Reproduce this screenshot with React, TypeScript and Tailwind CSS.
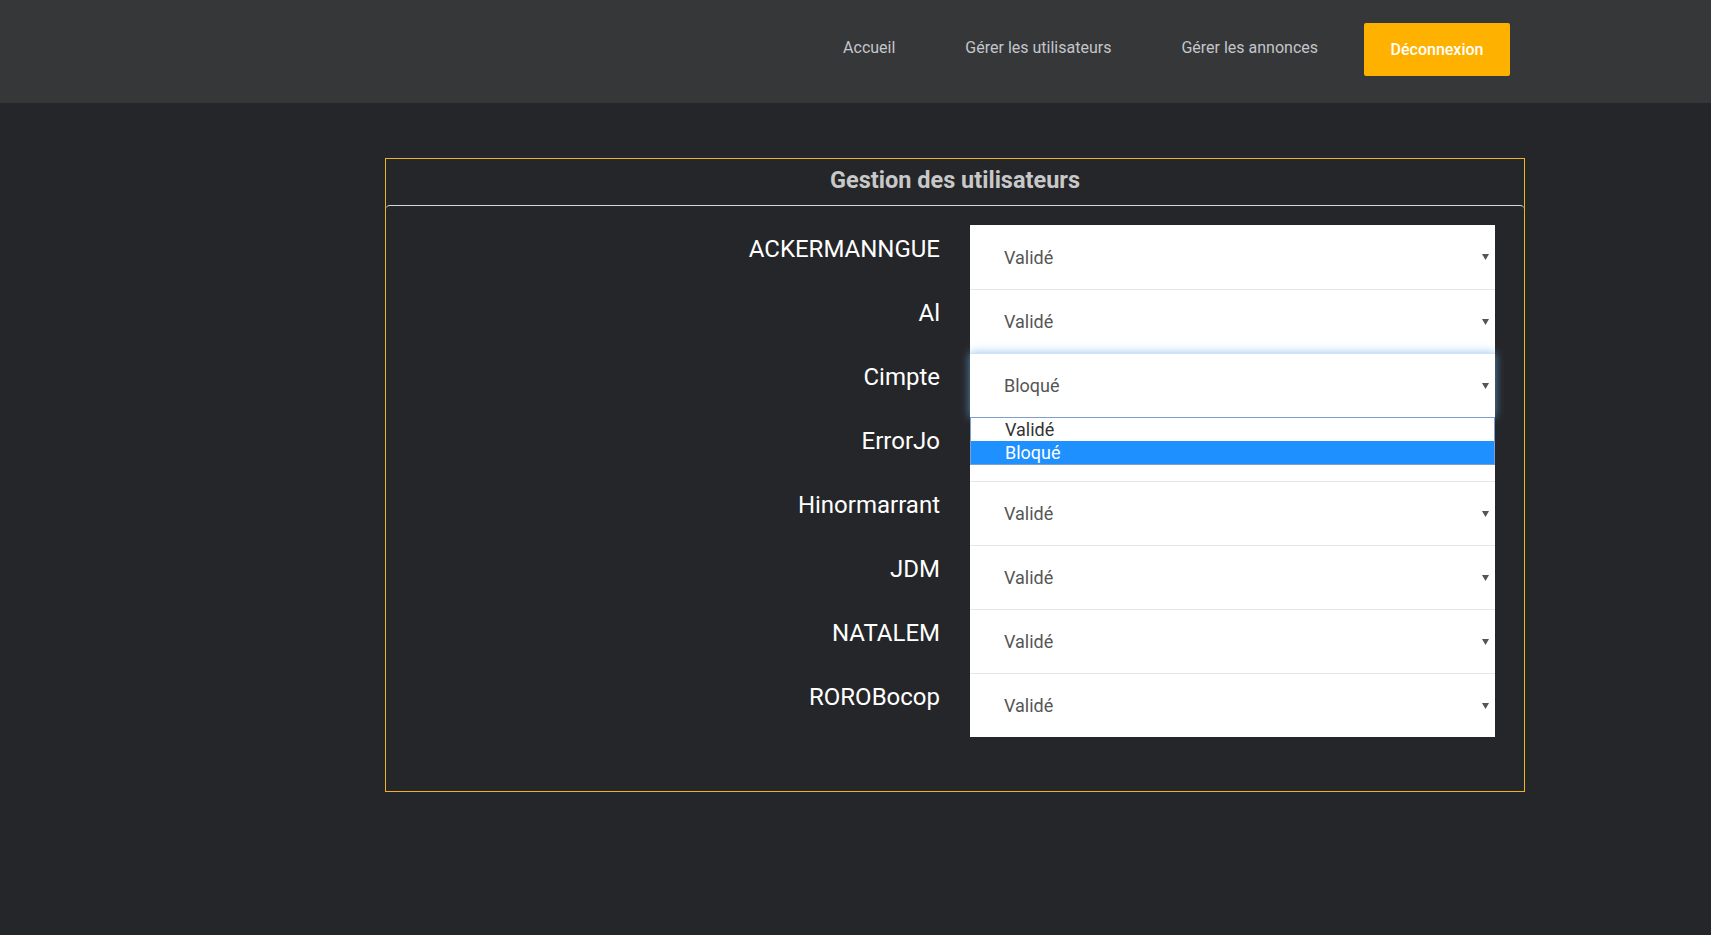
import { useState } from 'react';

type User = { name: string; status: string };

const users: User[] = [
  { name: 'ACKERMANNGUE', status: 'Validé' },
  { name: 'Al', status: 'Validé' },
  { name: 'Cimpte', status: 'Bloqué' },
  { name: 'ErrorJo', status: 'Validé' },
  { name: 'Hinormarrant', status: 'Validé' },
  { name: 'JDM', status: 'Validé' },
  { name: 'NATALEM', status: 'Validé' },
  { name: 'ROROBocop', status: 'Validé' },
];

const Arrow = () => (
  <svg width="7" height="6" viewBox="0 0 7 6" className="shrink-0">
    <path d="M0 0h7L3.5 6z" fill="#555" />
  </svg>
);

const Header = () => (
  <header className="h-[103px] bg-[#363739] flex items-center justify-end pr-[201px] pb-[4px]">
    <nav className="flex items-center text-[16px] text-[#c3c6ca]">
      <a className="px-[35px] pb-[4px]">Accueil</a>
      <a className="px-[35px] pb-[4px]">Gérer les utilisateurs</a>
      <a className="px-[35px] pb-[4px]">Gérer les annonces</a>
    </nav>
    <button className="ml-[11px] w-[146px] h-[53px] bg-[#ffb100] text-white text-[16px] font-medium rounded-[2px]">
      Déconnexion
    </button>
  </header>
);

const Row = ({
  user,
  index,
  open,
  covered,
}: {
  user: User;
  index: number;
  open: boolean;
  covered: boolean;
}) => (
  <div className="flex h-[64px]">
    <div className="w-[554px] pt-[10px] text-right text-[24px] leading-[28px] text-white">{user.name}</div>
    <div
      className={
        'relative ml-[30px] w-[525px] bg-white flex items-center justify-between pl-[34px] pr-[6px] ' +
        (index > 0 && !open ? 'border-t border-[#e6e6e6] ' : '') +
        (open ? 'z-10 shadow-[0_0_9px_rgba(102,175,233,0.75)] border-t border-[#cfe3f5]' : '')
      }
    >
      <span className={'text-[18px] text-[#555] ' + (covered ? 'invisible' : '')}>{user.status}</span>
      <Arrow />
      {open && (
        <div className="absolute left-0 top-full w-full bg-white border border-[#7e9dd0] text-[18px] leading-[23px] z-20">
          <div className="pl-[34px] text-[#333]">Validé</div>
          <div className="pl-[34px] bg-[#1e90ff] text-white">Bloqué</div>
        </div>
      )}
    </div>
  </div>
);

export default function App() {
  const [openIndex] = useState(2);

  return (
    <div className="min-h-[935px] bg-[#252629] font-['Roboto',sans-serif]">
      <Header />
      <main className="pt-[55px]">
        <section className="ml-[385px] w-[1140px] border border-[#f2b322]">
          <h2 className="h-[46px] flex items-center justify-center text-[23.5px] font-bold text-[#c8c8c8] pb-[2px]">
            Gestion des utilisateurs
          </h2>
          <div className="border-t border-[#d8d8d8] rounded-t-[4px] pt-[19px] pb-[54px]">
            {users.map((u, i) => (
              <Row key={u.name} user={u} index={i} open={i === openIndex} covered={i === openIndex + 1} />
            ))}
          </div>
        </section>
      </main>
    </div>
  );
}
